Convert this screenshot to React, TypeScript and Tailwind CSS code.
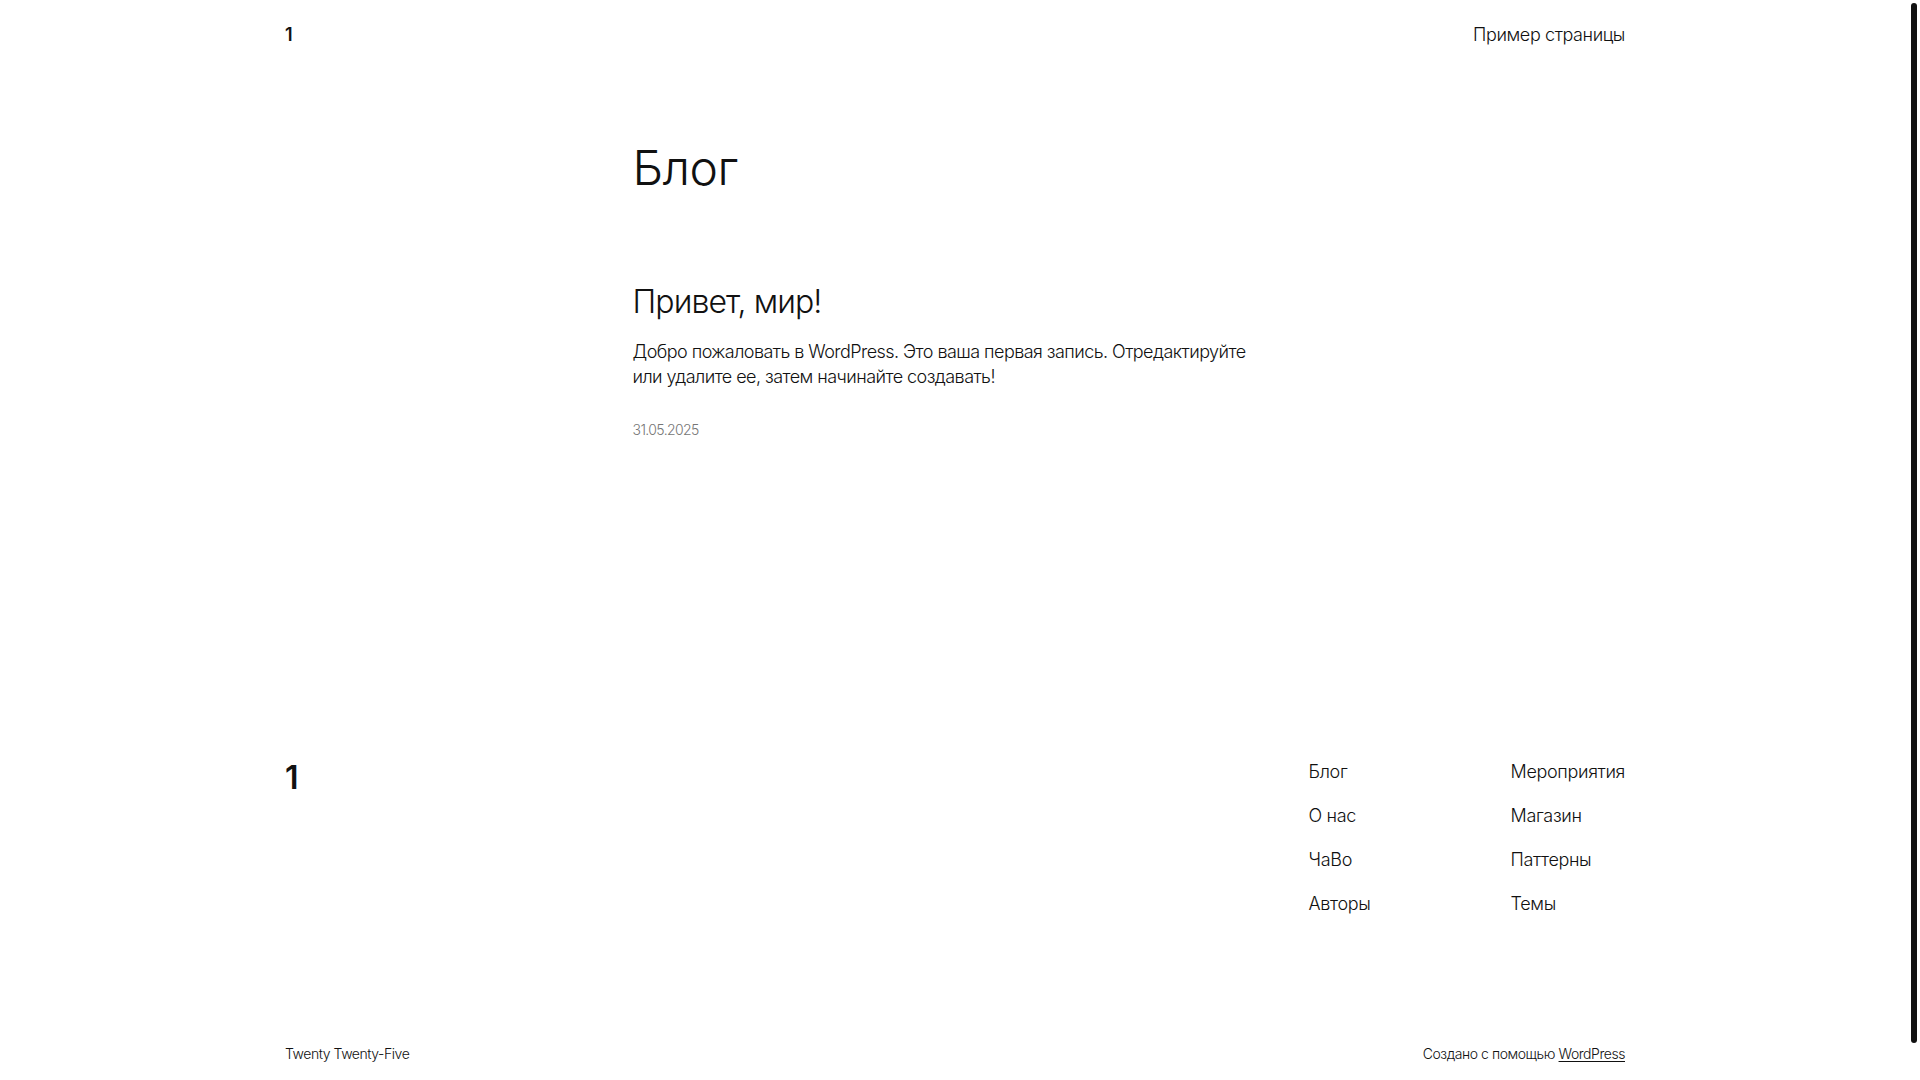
import React from "react";

const font = { fontFamily: '"Inter", "Noto Sans", sans-serif' };

const footerLinksLeft = ["Блог", "О нас", "ЧаВо", "Авторы"];
const footerLinksRight = ["Мероприятия", "Магазин", "Паттерны", "Темы"];

function NavColumn({ items }: { items: string[] }) {
  return (
    <ul className="flex flex-col gap-[19px]">
      {items.map((item) => (
        <li key={item}>
          <a href="#" className="text-[18px] leading-[25px] font-light tracking-[-0.35px] text-[#111111]">
            {item}
          </a>
        </li>
      ))}
    </ul>
  );
}

export default function App() {
  return (
    <div className="flex h-[1080px] w-[1920px] overflow-hidden bg-white text-[#111111]" style={font}>
      <div className="flex w-[1910px] flex-col">
        {/* Header */}
        <header className="mx-auto flex h-[68px] w-[1340px] items-center justify-between">
          <a href="#" className="text-[18px] font-semibold leading-[25px]">1</a>
          <nav>
            <a href="#" className="text-[18px] font-light leading-[25px] tracking-[-0.4px]">Пример страницы</a>
          </nav>
        </header>

        {/* Main */}
        <main className="mx-auto w-[645px]">
          <h1 className="mt-[71px] text-[48px] font-light leading-[58px] tracking-[-0.5px]">Блог</h1>

          <article className="mt-[86px]">
            <h2 className="text-[32px] font-light leading-[38px] tracking-[-0.9px]">
              <a href="#">Привет, мир!</a>
            </h2>
            <p className="mt-[18px] text-[18px] font-light leading-[25.2px] tracking-[-0.55px]">
              Добро пожаловать в WordPress. Это ваша первая запись. Отредактируйте или удалите ее, затем
              начинайте создавать!
            </p>
            <div className="mt-[31px] text-[14px] font-light leading-[20px] tracking-[-0.6px] text-[#767676]">
              31.05.2025
            </div>
          </article>
        </main>

        {/* Footer */}
        <footer className="mx-auto mt-[319px] w-[1340px]">
          <div className="flex items-start justify-between">
            <a href="#" className="text-[32px] font-semibold leading-[38px]">1</a>
            <div className="flex gap-[86px]">
              <div className="w-[116px]">
                <NavColumn items={footerLinksLeft} />
              </div>
              <NavColumn items={footerLinksRight} />
            </div>
          </div>
          <div className="mt-[128px] flex items-center justify-between text-[14px] leading-[20px] font-light tracking-[-0.45px]">
            <span>Twenty Twenty-Five</span>
            <span>
              Создано с помощью{" "}
              <a href="#" className="underline underline-offset-2">
                WordPress
              </a>
            </span>
          </div>
        </footer>
      </div>

      {/* Scrollbar */}
      <div className="flex w-[10px] flex-col pt-[3px] pl-[1px]">
        <div className="h-[1040px] w-[6px] rounded-full bg-[#111111]" />
      </div>
    </div>
  );
}
